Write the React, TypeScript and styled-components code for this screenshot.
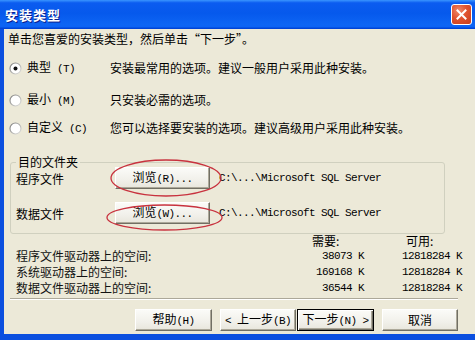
import React from "react";
import styled, { createGlobalStyle } from "styled-components";

const CJK = `"Noto Sans CJK SC", "Noto Sans", sans-serif`;
const MONO = `"Liberation Mono", "Noto Sans CJK SC", monospace`;

const GlobalStyle = createGlobalStyle`
  html, body {
    margin: 0;
    padding: 0;
    background: #ece9d8;
  }
  body {
    font-family: ${CJK};
    font-size: 12px;
    color: #000;
  }
`;

const Window = styled.div`
  width: 475px;
  height: 340px;
  display: flex;
  flex-direction: column;
  overflow: hidden;
  background: #ece9d8;
`;

const TitleBar = styled.div`
  flex: none;
  height: 29px;
  box-sizing: border-box;
  display: flex;
  align-items: center;
  justify-content: space-between;
  padding: 0 3px 0 5px;
  background: linear-gradient(
    180deg,
    #3a95ff 0%,
    #0b5cf0 10%,
    #0659ec 45%,
    #0d65f4 85%,
    #0c63f4 92%,
    #0048dc 97%,
    #003ecf 100%
  );
`;

const TitleText = styled.span`
  color: #fff;
  font-family: ${CJK};
  font-size: 13px;
  font-weight: 700;
  letter-spacing: 1px;
  line-height: 16px;
  text-shadow: 1px 1px #0a1c8a;
`;

const CloseButton = styled.div`
  width: 21px;
  height: 21px;
  box-sizing: border-box;
  border: 1px solid #fff;
  border-radius: 3px;
  display: flex;
  align-items: center;
  justify-content: center;
  background: radial-gradient(circle at 35% 30%, #f08a6c 0%, #e0532f 45%, #c73d1c 100%);
`;

const Frame = styled.div`
  flex: 1;
  display: flex;
  min-height: 0;
  border-left: 4px solid #0b4fdf;
  border-bottom: 6px solid #0b4fdf;
`;

const Body = styled.div`
  flex: 1;
  display: flex;
  flex-direction: column;
  padding: 3px 0 0 4px;
  min-width: 0;
`;

const Intro = styled.div`
  line-height: 14px;
  white-space: nowrap;
`;

const OptionRow = styled.div<{ $gap: number }>`
  display: grid;
  grid-template-columns: 18px 83px 1fr;
  align-items: center;
  height: 14px;
  line-height: 14px;
  padding-left: 1px;
  margin-top: ${(p) => p.$gap}px;
  white-space: nowrap;
`;

const RadioBox = styled.span`
  display: flex;
  align-items: center;
`;

const OptionLabel = styled.span`
  font-size: 12px;
`;

const Hotkey = styled.span`
  font-family: ${MONO};
  font-size: 11px;
  letter-spacing: -0.6px;
`;

const Group = styled.fieldset`
  margin: 21px 30px 0 2px;
  padding: 0 5px 9px 5px;
  border: 1px solid #d0d0bf;
  border-radius: 3px;
  min-width: 0;
`;

const GroupLegend = styled.legend`
  padding: 0 2px;
  line-height: 14px;
  font-size: 12px;
`;

const FolderRow = styled.div<{ $gap: number }>`
  display: flex;
  align-items: center;
  height: 22px;
  margin-top: ${(p) => p.$gap}px;
  white-space: nowrap;
`;

const FolderLabel = styled.span`
  width: 99px;
  flex: none;
`;

const ButtonWrap = styled.div`
  position: relative;
  flex: none;
`;

const Button = styled.button<{ $w: number; $default?: boolean; $gap?: number }>`
  display: block;
  width: ${(p) => p.$w}px;
  height: 22px;
  margin: 0 0 0 ${(p) => p.$gap ?? 0}px;
  padding: 0;
  box-sizing: border-box;
  font-family: ${CJK};
  font-size: 12px;
  line-height: 18px;
  text-align: center;
  color: #000;
  background: linear-gradient(180deg, #fbfbf8 0%, #f1f0ea 60%, #e8e6dc 100%);
  border: 1px solid;
  border-color: ${(p) => (p.$default ? "#000" : "#fff #716f64 #716f64 #fff")};
  box-shadow: ${(p) =>
    p.$default
      ? "inset 1px 1px #fff, inset -1px -1px #716f64, inset -2px -2px #aca899"
      : "inset -1px -1px #aca899"};
  white-space: nowrap;
`;

const Annotation = styled.svg`
  position: absolute;
  pointer-events: none;
  overflow: visible;
`;

const PathText = styled.span`
  margin-left: 9px;
  font-family: ${MONO};
  font-size: 11px;
  letter-spacing: -0.6px;
`;

const SpaceGrid = styled.div`
  display: grid;
  grid-template-columns: 294px 56px 98px;
  padding-left: 8px;
  white-space: nowrap;
`;

const HeadCell = styled.div<{ $pad: number }>`
  line-height: 14px;
  padding-left: ${(p) => p.$pad}px;
`;

const SpaceLabel = styled.div`
  line-height: 16px;
  font-size: 12px;
  color: #111;
`;

const SpaceValue = styled.div`
  line-height: 16px;
  text-align: right;
  padding-right: 2px;
  font-family: ${MONO};
  font-size: 11px;
  letter-spacing: -0.6px;
`;

const Separator = styled.div`
  margin: 2px 17px 0 2px;
  border-top: 1px solid #aca899;
  border-bottom: 1px solid #fff;
`;

const ButtonBar = styled.div`
  display: flex;
  justify-content: flex-end;
  padding-right: 17px;
  margin-top: 9px;
`;

function Radio({ checked }: { checked?: boolean }) {
  return (
    <svg width="13" height="13" viewBox="0 0 13 13">
      <defs>
        <linearGradient id="rb" x1="0" y1="0" x2="1" y2="1">
          <stop offset="0" stopColor="#7b7b7b" />
          <stop offset="1" stopColor="#e4e4e0" />
        </linearGradient>
      </defs>
      <circle cx="6.5" cy="6.5" r="5.5" fill="#fff" stroke="url(#rb)" strokeWidth="1.2" />
      {checked && <circle cx="6.5" cy="6.5" r="2" fill="#111" />}
    </svg>
  );
}

function Ellipse({ left, top, w, h }: { left: number; top: number; w: number; h: number }) {
  return (
    <Annotation
      width={w}
      height={h}
      style={{ left, top }}
      viewBox={`0 0 ${w} ${h}`}
    >
      <ellipse
        cx={w / 2}
        cy={h / 2}
        rx={w / 2 - 1}
        ry={h / 2 - 1}
        fill="none"
        stroke="#c8323e"
        strokeWidth="1.3"
      />
    </Annotation>
  );
}

const options = [
  { label: "典型", key: "T", desc: "安装最常用的选项。建议一般用户采用此种安装。", gap: 14, checked: true },
  { label: "最小", key: "M", desc: "只安装必需的选项。", gap: 18 },
  { label: "自定义", key: "C", desc: "您可以选择要安装的选项。建议高级用户采用此种安装。", gap: 14 },
];

const spaces = [
  { label: "程序文件驱动器上的空间:", need: "38073 K", free: "12818284 K" },
  { label: "系统驱动器上的空间:", need: "169168 K", free: "12818284 K" },
  { label: "数据文件驱动器上的空间:", need: "36544 K", free: "12818284 K" },
];

export default function App() {
  return (
    <>
      <GlobalStyle />
      <Window>
        <TitleBar>
          <TitleText>安装类型</TitleText>
          <CloseButton>
            <svg width="11" height="11" viewBox="0 0 11 11">
              <path d="M1.5 1.5 L9.5 9.5 M9.5 1.5 L1.5 9.5" stroke="#fff" strokeWidth="2" strokeLinecap="square" />
            </svg>
          </CloseButton>
        </TitleBar>
        <Frame>
          <Body>
            <Intro>单击您喜爱的安装类型，然后单击“下一步”。</Intro>

            {options.map((o) => (
              <OptionRow key={o.key} $gap={o.gap}>
                <RadioBox>
                  <Radio checked={o.checked} />
                </RadioBox>
                <OptionLabel>
                  {o.label}
                  <Hotkey> ({o.key})</Hotkey>
                </OptionLabel>
                <span>{o.desc}</span>
              </OptionRow>
            ))}

            <Group>
              <GroupLegend>目的文件夹</GroupLegend>
              <FolderRow $gap={-2}>
                <FolderLabel>程序文件</FolderLabel>
                <ButtonWrap>
                  <Button $w={95}>
                    浏览<Hotkey>(R)...</Hotkey>
                  </Button>
                  <Ellipse left={-5} top={-8} w={112} h={38} />
                </ButtonWrap>
                <PathText>C:\...\Microsoft SQL Server</PathText>
              </FolderRow>
              <FolderRow $gap={13}>
                <FolderLabel>数据文件</FolderLabel>
                <ButtonWrap>
                  <Button $w={95}>
                    浏览<Hotkey>(W)...</Hotkey>
                  </Button>
                  <Ellipse left={-9} top={2} w={117} h={27} />
                </ButtonWrap>
                <PathText>C:\...\Microsoft SQL Server</PathText>
              </FolderRow>
            </Group>

            <SpaceGrid>
              <div />
              <HeadCell $pad={2}>需要:</HeadCell>
              <HeadCell $pad={40}>可用:</HeadCell>
              {spaces.map((s) => (
                <React.Fragment key={s.label}>
                  <SpaceLabel>{s.label}</SpaceLabel>
                  <SpaceValue>{s.need}</SpaceValue>
                  <SpaceValue>{s.free}</SpaceValue>
                </React.Fragment>
              ))}
            </SpaceGrid>

            <Separator />

            <ButtonBar>
              <Button $w={77}>
                帮助<Hotkey>(H)</Hotkey>
              </Button>
              <Button $w={76} $gap={8}>
                <Hotkey>&lt; </Hotkey>上一步<Hotkey>(B)</Hotkey>
              </Button>
              <Button $w={77} $gap={1} $default>
                下一步<Hotkey>(N) &gt;</Hotkey>
              </Button>
              <Button $w={76} $gap={8}>
                取消
              </Button>
            </ButtonBar>
          </Body>
        </Frame>
      </Window>
    </>
  );
}
